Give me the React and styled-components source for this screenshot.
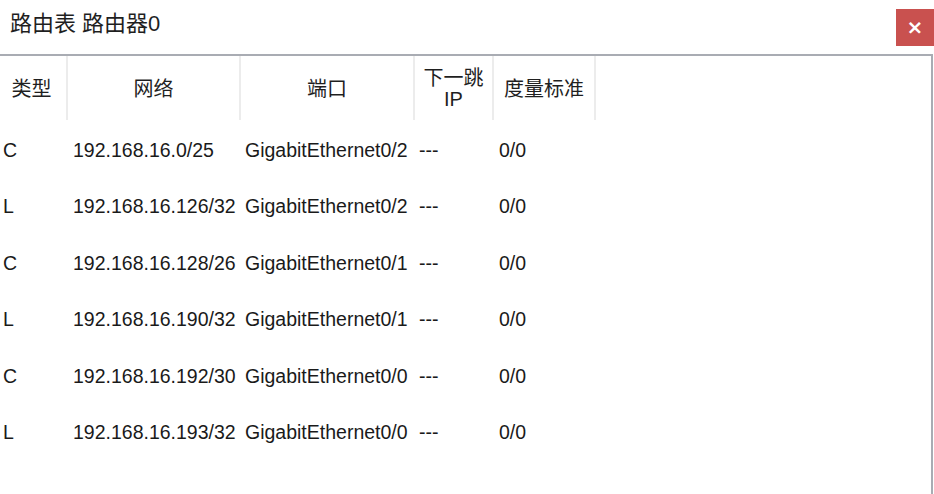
import React from 'react';
import styled, { createGlobalStyle } from 'styled-components';

const GlobalStyle = createGlobalStyle`
  html, body {
    margin: 0;
    padding: 0;
    background: #ffffff;
    overflow: hidden;
  }
  body {
    font-family: "Liberation Sans", "Noto Sans CJK SC", Arial, sans-serif;
    color: #1a1a1a;
  }
`;

const Window = styled.div`
  width: 934px;
  height: 494px;
  display: flex;
  flex-direction: column;
  background: #ffffff;
`;

const TitleBar = styled.div`
  height: 54px;
  display: flex;
  align-items: flex-start;
  justify-content: space-between;
  flex-shrink: 0;
`;

const Title = styled.h1`
  margin: 11px 0 0 10px;
  font-size: 22px;
  font-weight: normal;
  line-height: 26px;
  color: #1f1f1f;
  font-family: "Liberation Sans", "Noto Sans CJK SC", sans-serif;
`;

const CloseButton = styled.button`
  margin-top: 9px;
  width: 38px;
  height: 37px;
  border: none;
  padding: 0;
  background: #c9514f;
  color: #ffffff;
  font-size: 20px;
  font-weight: bold;
  font-family: "DejaVu Sans", sans-serif;
  line-height: 37px;
  cursor: pointer;
`;

const Panel = styled.div`
  flex: 1;
  border-top: 2px solid #a9acb3;
  border-right: 2px solid #a9acb3;
  margin-right: 1px;
  margin-left: -3px;
`;

const Grid = styled.div`
  display: grid;
  grid-template-columns: 71px 173px 174px 79px 102px;
`;

const HeadCell = styled.div`
  height: 64px;
  border-right: 2px solid #ececec;
  display: flex;
  flex-direction: column;
  align-items: center;
  justify-content: center;
  text-align: center;
  font-size: 20px;
  line-height: 24px;
  color: #1f1f1f;
  font-family: "Noto Sans CJK SC", "Liberation Sans", sans-serif;
`;

const HeadLine = styled.span`
  display: block;
  height: 23px;
  line-height: 23px;
  font-family: ${(p) =>
    p.$latin ? '"Liberation Sans", Arial, sans-serif' : '"Noto Sans CJK SC", sans-serif'};
`;

const Cell = styled.div`
  height: 56.5px;
  display: flex;
  align-items: center;
  padding-left: ${(p) => p.$pad || 6}px;
  font-size: 19.5px;
  color: #1a1a1a;
  white-space: nowrap;
  font-family: "Liberation Sans", Arial, sans-serif;
`;

const Spacer = styled.div`
  height: 2px;
  grid-column: 1 / -1;
`;

const routes = [
  ['C', '192.168.16.0/25', 'GigabitEthernet0/2', '---', '0/0'],
  ['L', '192.168.16.126/32', 'GigabitEthernet0/2', '---', '0/0'],
  ['C', '192.168.16.128/26', 'GigabitEthernet0/1', '---', '0/0'],
  ['L', '192.168.16.190/32', 'GigabitEthernet0/1', '---', '0/0'],
  ['C', '192.168.16.192/30', 'GigabitEthernet0/0', '---', '0/0'],
  ['L', '192.168.16.193/32', 'GigabitEthernet0/0', '---', '0/0'],
];

const pads = [6, 5, 4, 4, 5];

export default function App() {
  return (
    <Window>
      <GlobalStyle />
      <TitleBar>
        <Title>路由表 路由器0</Title>
        <CloseButton>×</CloseButton>
      </TitleBar>
      <Panel>
        <Grid>
          <HeadCell>类型</HeadCell>
          <HeadCell>网络</HeadCell>
          <HeadCell>端口</HeadCell>
          <HeadCell>
            <HeadLine>下一跳</HeadLine>
            <HeadLine $latin>IP</HeadLine>
          </HeadCell>
          <HeadCell>度量标准</HeadCell>
          <Spacer />
          {routes.map((row, i) =>
            row.map((v, j) => (
              <Cell key={`${i}-${j}`} $pad={pads[j]}>
                {v}
              </Cell>
            ))
          )}
        </Grid>
      </Panel>
    </Window>
  );
}
